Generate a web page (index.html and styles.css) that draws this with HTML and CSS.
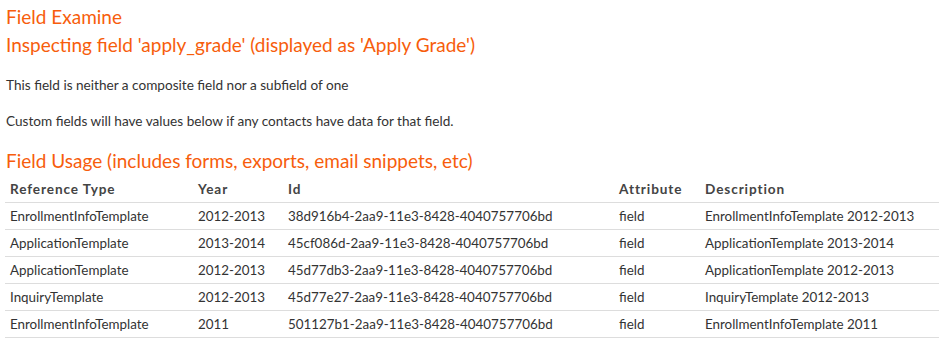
FILE: index.html
```html
<!DOCTYPE html>
<html>
<head>
<meta charset="utf-8">
<link rel="stylesheet" href="styles.css">
</head>
<body>
<div class="page">
  <h1 class="title">Field Examine</h1>
  <h2 class="title">Inspecting field 'apply_grade' (displayed as 'Apply Grade')</h2>
  <p class="note">This field is neither a composite field nor a subfield of one</p>
  <p class="note">Custom fields will have values below if any contacts have data for that field.</p>
  <h2 class="title">Field Usage (includes forms, exports, email snippets, etc)</h2>
  <table class="usage">
    <thead>
      <tr>
        <th class="c-type">Reference Type</th>
        <th class="c-year">Year</th>
        <th class="c-id">Id</th>
        <th class="c-attr">Attribute</th>
        <th class="c-desc">Description</th>
      </tr>
    </thead>
    <tbody>
      <tr><td>EnrollmentInfoTemplate</td><td>2012-2013</td><td>38d916b4-2aa9-11e3-8428-4040757706bd</td><td>field</td><td>EnrollmentInfoTemplate 2012-2013</td></tr>
      <tr><td>ApplicationTemplate</td><td>2013-2014</td><td>45cf086d-2aa9-11e3-8428-4040757706bd</td><td>field</td><td>ApplicationTemplate 2013-2014</td></tr>
      <tr><td>ApplicationTemplate</td><td>2012-2013</td><td>45d77db3-2aa9-11e3-8428-4040757706bd</td><td>field</td><td>ApplicationTemplate 2012-2013</td></tr>
      <tr><td>InquiryTemplate</td><td>2012-2013</td><td>45d77e27-2aa9-11e3-8428-4040757706bd</td><td>field</td><td>InquiryTemplate 2012-2013</td></tr>
      <tr><td>EnrollmentInfoTemplate</td><td>2011</td><td>501127b1-2aa9-11e3-8428-4040757706bd</td><td>field</td><td>EnrollmentInfoTemplate 2011</td></tr>
    </tbody>
  </table>
</div>
</body>
</html>
```

FILE: styles.css
```css
html, body {
  margin: 0;
  padding: 0;
  background: #ffffff;
}

body {
  font-family: "Lato", "Open Sans", sans-serif;
  color: #333333;
  font-size: 13.6px;
}

.page {
  padding: 3px 0 0 5px;
}

.title {
  margin: 0;
  font-size: 19px;
  font-weight: normal;
  line-height: 28px;
  color: #f75d0c;
  padding-left: 1px;
}

.note {
  margin: 16px 0 0 0;
  line-height: 20px;
  padding-left: 1px;
}

.note + .title {
  margin-top: 16px;
}

.usage {
  width: 100%;
  border-collapse: collapse;
  margin: 0;
}

.usage th,
.usage td {
  text-align: left;
  padding: 0 5px;
  height: 26px;
  border-bottom: 1px solid #dddddd;
  vertical-align: middle;
  white-space: nowrap;
}

.usage td {
  font-size: 13.4px;
}

.usage th {
  font-weight: bold;
  color: #444444;
  height: 27px;
  letter-spacing: 0.9px;
}

.c-type { width: 178px; }
.c-year { width: 80px; }
.c-id { width: 321px; }
.c-attr { width: 76px; }
```
